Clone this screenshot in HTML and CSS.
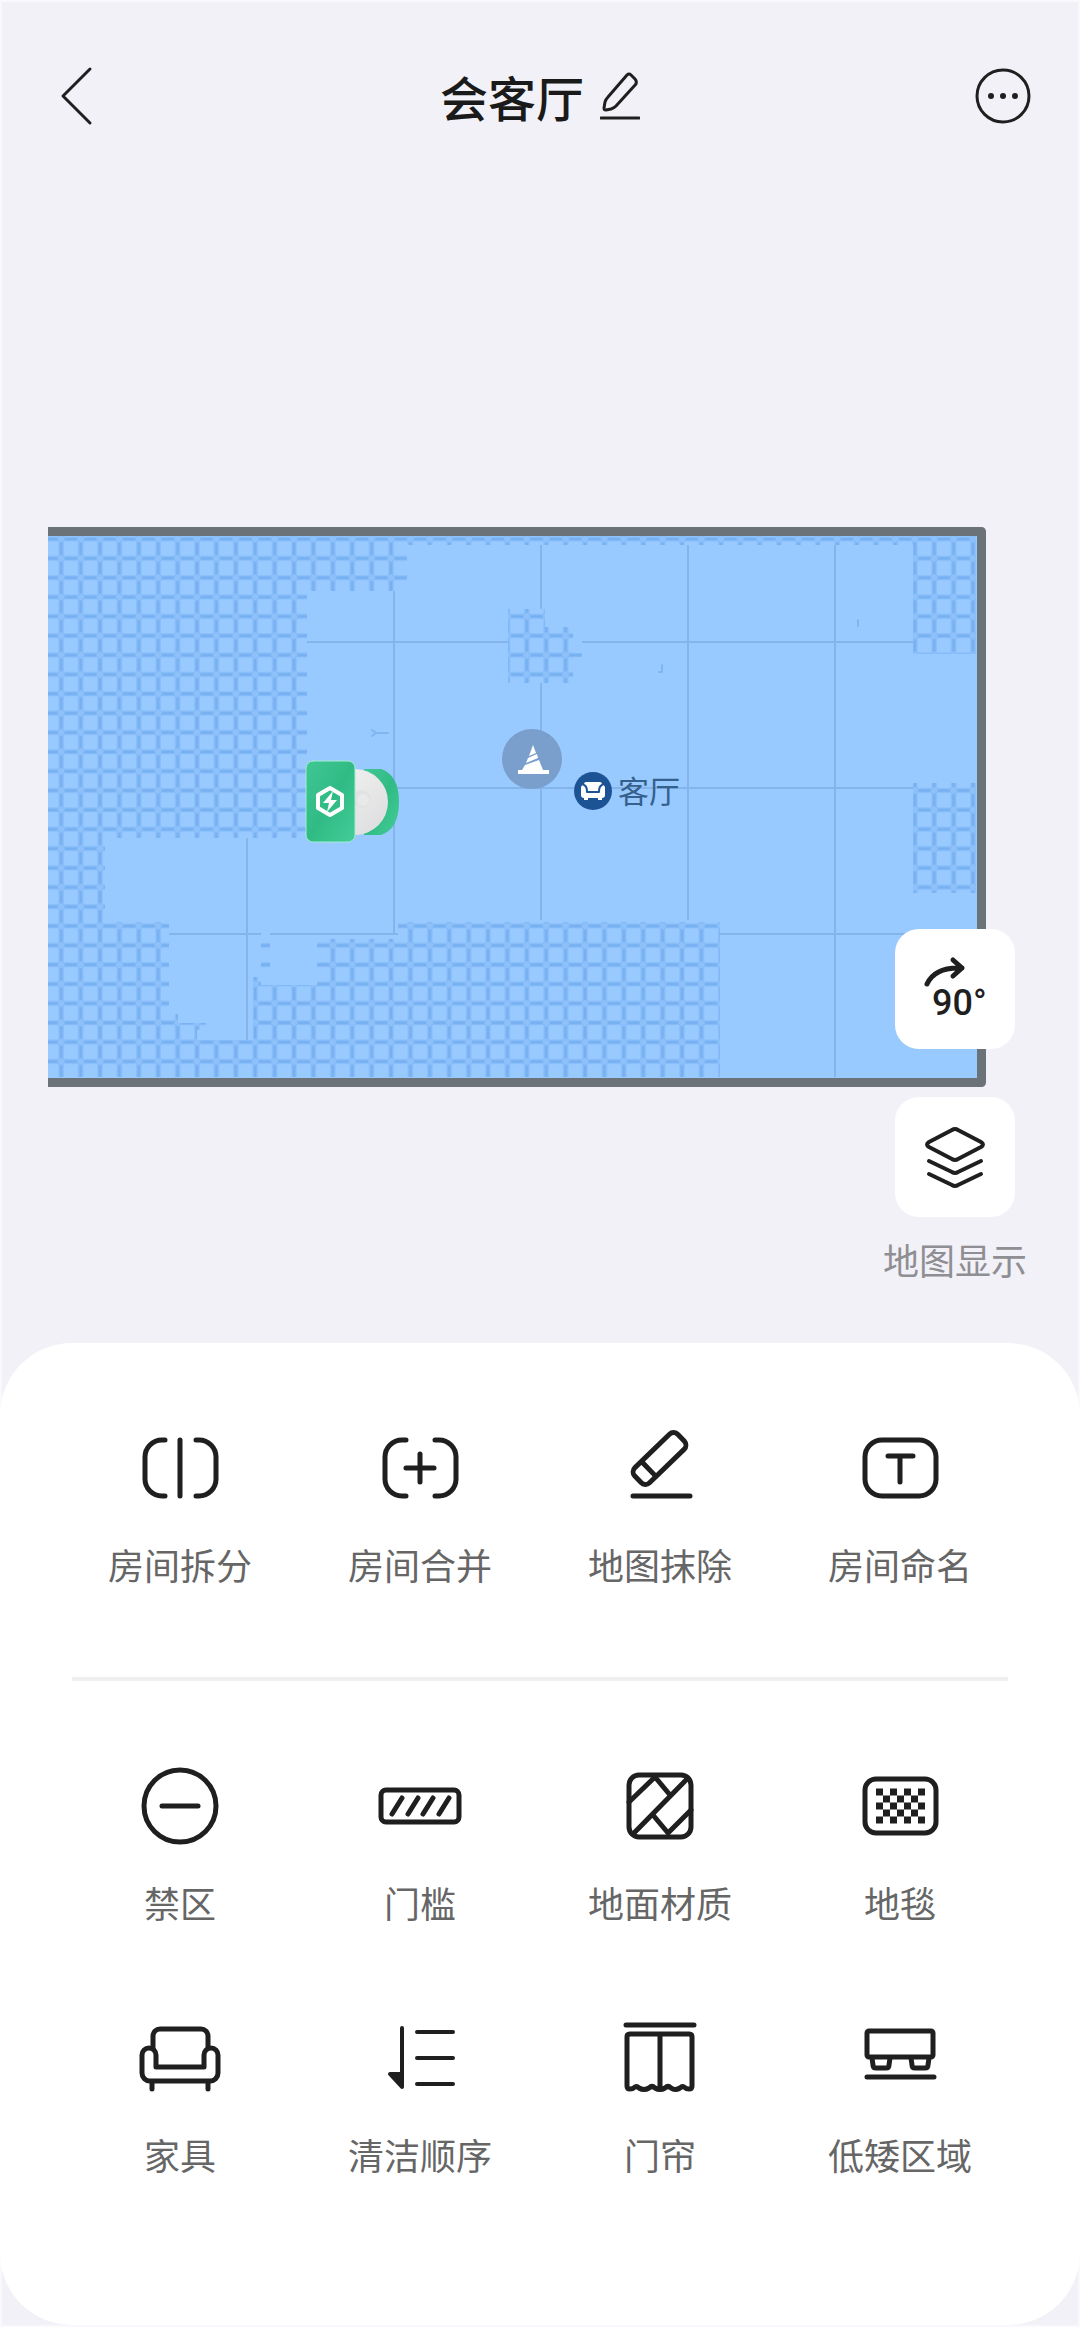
FILE: index.html
```html
<!DOCTYPE html>
<html lang="zh-CN">
<head>
    <meta charset="UTF-8">
    <meta name="viewport" content="width=device-width, initial-scale=1.0">
    <title>会客厅</title>
    <link rel="stylesheet" href="styles.css">
</head>
<body>

    <header class="topbar">
        <button class="icon-btn" aria-label="返回">
            <svg class="nav-icon" viewBox="0 0 60 60"><path d="M43 3L16 30L43 57"/></svg>
        </button>
        <div class="title">
            <h1>会客厅</h1>
            <button class="icon-btn" aria-label="编辑名称">
                <svg class="edit-icon" viewBox="0 0 40 48">
                    <path d="M27 3q2-2 4 0l4 4q2 2 1 5L16 34q-2 2-5 3l-5 1q-2 0-2-2l1-6q1-3 3-5z"/>
                    <path d="M1 46H39"/>
                </svg>
            </button>
        </div>
        <button class="icon-btn" aria-label="更多">
            <svg class="nav-icon" viewBox="0 0 60 60">
                <circle cx="30" cy="30" r="26"/>
                <g class="solid"><circle cx="18" cy="30" r="3"/><circle cx="30" cy="30" r="3"/><circle cx="42" cy="30" r="3"/></g>
            </svg>
        </button>
    </header>

    <main class="stage">
        <svg class="map" viewBox="0 0 938 560">
            <defs>
                <pattern id="weave" x="3.5" y="2.5" width="19.4" height="19.35" patternUnits="userSpaceOnUse">
                    <rect x="7.2" width="5" height="20" fill="#82b9f7"/>
                    <rect y="7.2" width="20" height="4.6" fill="#82b9f7"/>
                    <rect x="8.700" width="2" height="20" fill="#76b0f0"/>
                    <rect y="8.500" width="20" height="2" fill="#76b0f0"/>
                    <path d="M9.7 5.5L13.7 9.5L9.7 13.5L5.7 9.5z" fill="#8ec1fa"/>
                </pattern>
                <linearGradient id="green" x1="0" y1="0" x2="1" y2="1">
                    <stop offset="0" stop-color="#3fc795"/>
                    <stop offset="0.5" stop-color="#31bb84"/>
                    <stop offset="1" stop-color="#43cc97"/>
                </linearGradient>
                <linearGradient id="disc" x1="0" y1="0" x2="1" y2="1">
                    <stop offset="0" stop-color="#f4f4f4"/>
                    <stop offset="1" stop-color="#dcdcde"/>
                </linearGradient>
            </defs>

            <!-- floor -->
            <rect class="floor" y="4" width="934" height="552"/>
            <path class="grid" d="M199 311V513M346 64V408M493 18V82M493 156V393M640 18V393M787 18V550M259 115H460M534 115H865M346 261H865M121 407H213M222 407H350M672 407H928"/>

            <!-- carpet -->
            <path fill="url(#weave)" d="M0 9H928V127H865V18H359V64H259V311H57V395H121V487H130V496H158V503H149V513H205V450H213V458H269V412H350V395H672V550H0z"/>
            <path fill="url(#weave)" d="M460 82H497V100H525V126H534V130H525V156H460zM865 256H928V366H865zM213 416H222V442H213z"/>
            <path class="speck" d="M324 203l4 3l-4 3M328 206H340M611 145h3v-7M810 93v6"/>

            <path class="wall" d="M0 4.500H933.500V555.500H0"/>

            <!-- dock and robot -->
            <path fill="url(#green)" d="M316 242H333Q351 248 351 275T333 308H316z"/>
            <circle cx="307" cy="275" r="33" fill="url(#disc)"/>
            <circle cx="314" cy="272" r="9" fill="#e2e2e4"/>
            <circle cx="315" cy="273" r="6" fill="#e9e9ea"/>
            <rect class="dock" x="258" y="234" width="49" height="81" rx="7"/>
            <path class="hex" d="M282 261L294 268V281L282 288L270 281V268z"/>
            <path class="white" d="M285 264L275 276H281L279 285L289 273H283z"/>

            <!-- obstacle -->
            <circle class="cone" cx="484" cy="232" r="30"/>
            <path class="white" d="M485 218L488 226L481 229zM480 231L489 227L490 231L478 236zM477 238L491 233L495 243H501V247H470V243H474z"/>

            <!-- room label -->
            <circle class="room-dot" cx="545" cy="264" r="19"/>
            <path class="white" d="M538 255H552Q554 255 554 258Q557 258 557 261V268Q557 271 554 271V273H550V271H540V273H536V271Q533 271 533 268V261Q533 258 536 258Q536 255 538 255z"/>
            <path class="room-seat" d="M536 258Q539 259 539 265H551Q551 259 554 258"/>
            <text class="room-name" x="570" y="276">客厅</text>
        </svg>

        <div class="side">
            <button class="side-btn" aria-label="旋转90度">
                <svg class="icon" viewBox="0 0 96 96">
                    <path d="M20 43C25 32 36 26 55 27M46 19L55 27L46 35"/>
                    <text class="deg" x="25" y="74">90°</text>
                </svg>
            </button>
            <button class="side-btn" id="layers" aria-label="地图显示">
                <svg class="icon thin" viewBox="0 0 96 96">
                    <path d="M45 21q3-2 6 0L74 33q4 2.500 0 5L51 50q-3 2-6 0L22 38q-4-2.500 0-5z"/>
                    <path d="M22 52L45 63q3 2 6 0L74 52M22 65L45 76q3 2 6 0L74 65"/>
                </svg>
            </button>
            <label class="side-label" for="layers">地图显示</label>
        </div>
    </main>

    <section class="sheet">
        <div class="tools">
            <button class="tool">
                <svg class="icon" viewBox="0 0 96 96"><path d="M33 20h-3a17 17 0 0 0-17 17v22a17 17 0 0 0 17 17h3M64 20h3a17 17 0 0 1 17 17v22a17 17 0 0 1-17 17h-3M48 20V76"/></svg>
                <span>房间拆分</span>
            </button>
            <button class="tool">
                <svg class="icon" viewBox="0 0 96 96"><path d="M34 20h-4a17 17 0 0 0-17 17v22a17 17 0 0 0 17 17h4M63 20h4a17 17 0 0 1 17 17v22a17 17 0 0 1-17 17h-4M48 34V62M34 48H62"/></svg>
                <span>房间合并</span>
            </button>
            <button class="tool">
                <svg class="icon" viewBox="0 0 96 96">
                    <g transform="translate(47.500 38.500) rotate(-44)"><rect x="-30" y="-10.500" width="60" height="21" rx="6"/><path d="M-15-10V10"/></g>
                    <path d="M21 76H78"/>
                </svg>
                <span>地图抹除</span>
            </button>
            <button class="tool">
                <svg class="icon" viewBox="0 0 96 96"><rect x="13" y="20" width="71" height="56" rx="17"/><path d="M36 36H61M48 36V62"/></svg>
                <span>房间命名</span>
            </button>
        </div>

        <hr class="divider">

        <div class="tools">
            <button class="tool">
                <svg class="icon" viewBox="0 0 96 96"><circle cx="48" cy="48" r="36"/><path d="M30 48H66"/></svg>
                <span>禁区</span>
            </button>
            <button class="tool">
                <svg class="icon" viewBox="0 0 96 96"><rect x="9" y="32" width="78" height="32" rx="5"/><path d="M30 40L20 56M46 40L36 56M61 40L51 56M77 40L67 56"/></svg>
                <span>门槛</span>
            </button>
            <button class="tool">
                <svg class="icon" viewBox="0 0 96 96"><rect x="17" y="17" width="62" height="62" rx="10"/><path d="M17 44L43 19L58 37M76 20L21 76M41 57L56 75L79 52"/></svg>
                <span>地面材质</span>
            </button>
            <button class="tool">
                <svg class="icon" viewBox="0 0 96 96"><rect x="13" y="21" width="71" height="54" rx="11"/><path class="checker" d="M24 34H73M31 41H66M24 48H73M31 55H66M24 62H73"/></svg>
                <span>地毯</span>
            </button>
            <button class="tool">
                <svg class="icon" viewBox="0 0 96 96"><path d="M21 38V26a7 7 0 0 1 7-7H69a7 7 0 0 1 7 7V38M20 73V79M76 73V79"/><path d="M24 57V45a7 7 0 0 0-14 0V63a8 8 0 0 0 8 8H78a8 8 0 0 0 8-8V45a7 7 0 0 0-14 0V57z"/></svg>
                <span>家具</span>
            </button>
            <button class="tool">
                <svg class="icon thin" viewBox="0 0 96 96"><path d="M30 18V64M45 22H81M45 48H81M45 74H81"/><path class="solid" d="M18 64H30V77z"/></svg>
                <span>清洁顺序</span>
            </button>
            <button class="tool">
                <svg class="icon" viewBox="0 0 96 96"><path d="M14 15H82M48 24V79M20 24H77q3 0 3 3V76q0 3-3 3-3 0-5-2-2-1-4 1-5 3-9 0-3-3-6 0-5 3-10 0-3-3-6 0-5 3-10 0-2-2-4-1-2 2-5 2-3 0-3-3V27q0-3 3-3z"/></svg>
                <span>门帘</span>
            </button>
            <button class="tool">
                <svg class="icon" viewBox="0 0 96 96"><rect x="15" y="21" width="66" height="26" rx="2"/><path d="M20 48l1 7q0 3 3 3h10q3 0 3-3l1-7M59 48l1 7q0 3 3 3h10q3 0 3-3l1-7M15 67H82"/></svg>
                <span>低矮区域</span>
            </button>
        </div>
    </section>

</body>
</html>
```
FILE: styles.css
```css
* {
    box-sizing: border-box;
}

body {
    margin: 0;
    background-color: #f2f1f7;
    box-shadow: inset 0 0 0 2px #f9f8fc;
    font-family: "Noto Sans CJK SC", sans-serif;
    color: #1a1a1a;
    padding-bottom: 2px;
}

button {
    padding: 0;
    border: 0;
    background: none;
    font: inherit;
    color: inherit;
    cursor: pointer;
}

svg {
    display: block;
    fill: none;
    stroke: #1f1f1f;
    stroke-linecap: round;
    stroke-linejoin: round;
}

/* Header */
.topbar {
    display: flex;
    align-items: center;
    justify-content: space-between;
    height: 192px;
    padding: 0 47px;
}

.title {
    display: flex;
    align-items: center;
    gap: 16px;
}

.title h1 {
    margin: 0;
    font-size: 48px;
    line-height: 64px;
    font-weight: 500;
}

.nav-icon {
    width: 60px;
    height: 60px;
    stroke-width: 3;
}

.edit-icon {
    width: 40px;
    height: 48px;
    stroke-width: 3;
}

.solid {
    fill: #1f1f1f;
}

.nav-icon .solid {
    stroke: none;
}

/* Map */
.stage {
    position: relative;
    padding: 335px 94px 256px 48px;
}

.map {
    width: 100%;
    height: auto;
    stroke: none;
}

.floor {
    fill: #98c9ff;
}

.grid {
    stroke: #85b4ea;
    stroke-width: 2;
    stroke-linecap: butt;
}

.speck {
    stroke: #7fb5f0;
    stroke-width: 2;
}

.wall {
    stroke: #6b7378;
    stroke-width: 9;
    stroke-linecap: butt;
}

.dock {
    fill: url(#green);
    stroke: #a5ecd0;
    stroke-width: 1;
}

.hex {
    stroke: #fff;
    stroke-width: 4;
}

.white {
    fill: #fff;
}

.cone {
    fill: #7a9fcc;
}

.room-dot {
    fill: #1c5394;
}

.room-seat {
    stroke: #1c5394;
    stroke-width: 2;
}

.room-name {
    font-size: 31px;
    fill: #355f8c;
}

.side {
    position: absolute;
    right: 53px;
    bottom: 60px;
    display: flex;
    flex-direction: column;
    align-items: center;
}

.side-btn {
    display: flex;
    align-items: center;
    justify-content: center;
    width: 120px;
    height: 120px;
    margin-bottom: 48px;
    border-radius: 24px;
    background-color: #fff;
}

#layers {
    margin-bottom: 18px;
}

.deg {
    font-family: Roboto, sans-serif;
    font-size: 36px;
    font-weight: 500;
    fill: #1f1f1f;
    stroke: none;
}

.side-label {
    font-size: 36px;
    line-height: 48px;
    color: #8e8e93;
}

/* Bottom sheet */
.sheet {
    padding: 77px 60px 147px;
    border-radius: 72px;
    background-color: #fff;
}

.tools {
    display: grid;
    grid-template-columns: repeat(4, 1fr);
    row-gap: 84px;
}

.tool {
    display: flex;
    flex-direction: column;
    align-items: center;
    gap: 24px;
    font-size: 36px;
    line-height: 48px;
    color: #666;
}

.icon {
    width: 96px;
    height: 96px;
    stroke-width: 5;
}

.thin {
    stroke-width: 4;
}

.checker {
    stroke-width: 7;
    stroke-linecap: butt;
    stroke-dasharray: 7 7;
}

.divider {
    height: 4px;
    margin: 89px 12px 77px;
    border: 0;
    background-color: #efeff0;
}
```
